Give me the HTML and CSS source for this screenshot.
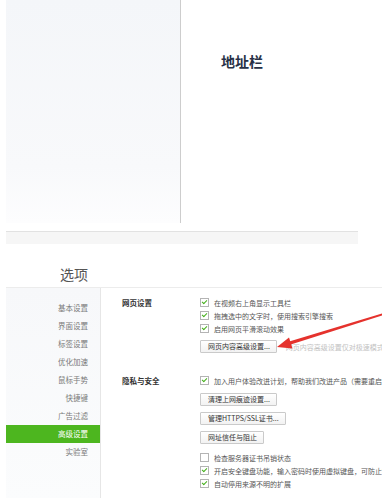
FILE: index.html
```html
<!DOCTYPE html>
<html>
<head>
<meta charset="utf-8">
<title>选项 - 高级设置</title>
<link rel="stylesheet" href="styles.css">
</head>

<body>
<!-- 上半部：地址栏示意 -->
<div class="shot-top">
  <div class="pane-side"></div>
  <div class="pane-main"><span class="addr">地址栏</span></div>
</div>
<div class="shot-band"></div>

<!-- 下半部：选项页 -->
<div class="opt-head">选项</div>
<div class="options">
  <div class="nav">
    <a>基本设置</a>
    <a>界面设置</a>
    <a>标签设置</a>
    <a>优化加速</a>
    <a>鼠标手势</a>
    <a>快捷键</a>
    <a>广告过滤</a>
    <a class="cur">高级设置</a>
    <a>实验室</a>
  </div>
  <div class="content">
    <dl class="sec">
      <dt>网页设置</dt>
      <dd>
        <div class="row"><span class="cb on"></span>在视频右上角显示工具栏</div>
        <div class="row"><span class="cb on"></span>拖拽选中的文字时，使用搜索引擎搜索</div>
        <div class="row"><span class="cb on"></span>启用网页平滑滚动效果</div>
        <div class="btn-row"><span class="btn">网页内容高级设置...</span><span class="hint">网页内容高级设置仅对极速模式有效</span></div>
      </dd>
    </dl>
    <dl class="sec">
      <dt>隐私与安全</dt>
      <dd>
        <div class="row"><span class="cb on"></span>加入用户体验改进计划，帮助我们改进产品（需要重启浏览器）</div>
        <div class="btn-row"><span class="btn">清理上网痕迹设置...</span></div>
        <div class="btn-row"><span class="btn">管理HTTPS/SSL证书...</span></div>
        <div class="btn-row"><span class="btn">网址信任与阻止</span></div>
        <div class="row first"><span class="cb"></span>检查服务器证书吊销状态</div>
        <div class="row"><span class="cb on"></span>开启安全键盘功能，输入密码时使用虚拟键盘，可防止键盘记录</div>
        <div class="row"><span class="cb on"></span>自动停用来源不明的扩展</div>
      </dd>
    </dl>
  </div>
</div>

<!-- 红色标注箭头 -->
<svg class="mark" width="382" height="498" viewBox="0 0 382 498">
  <polygon points="382,313.5 382,315.5 290,344.8 289.2,341.6" fill="#e5322d"/>
  <polygon points="277,347 289,337.5 292.5,348.5" fill="#e5322d"/>
</svg>
</body>
</html>
```

FILE: styles.css
```css
/* 整体 */
html, body {margin: 0; padding: 0;}
body {position: relative; width: 382px; height: 498px; overflow: hidden; background: #fff; font-family: "Noto Sans CJK SC", "Liberation Sans", sans-serif; color: #555;}

/* 上半部截图 */
.shot-top {display: flex; margin-left: 6px; width: 352px; height: 231px; border-bottom: 1px solid #e2e2e2;}
.shot-top .pane-side {width: 174px; height: 223px; border-right: 1px solid #cdcdcd; background: linear-gradient(#f4f6f9, #f8f9fb 75%, #fdfdfe);}
.shot-top .pane-main {padding: 48px 0 0 40px;}
.shot-top .addr {font-size: 14px; line-height: 18px; font-weight: bold; color: #263046;}
.shot-band {margin-left: 6px; width: 352px; height: 12px; background: #f6f6f6;}

/* 选项页 */
.opt-head {box-sizing: border-box; height: 43px; padding: 21px 0 0 60px; font-size: 14px; line-height: 18px; color: #555;}
.options {display: flex; margin-left: 6px; height: 212px; border-top: 1px solid #ececec;}
.options .nav {width: 94px; padding-top: 11px; border-right: 1px solid #e6e6e6; background: linear-gradient(#f7f8fa, #fbfcfd);}
.options .nav a {display: block; height: 18px; line-height: 18px; padding-right: 12px; text-align: right; font-size: 7.5px; color: #7a7a7a;}
.options .nav a.cur {background: #4db61f; color: #fff;}

.content {flex: 1; min-width: 0; padding: 8px 0 0 21px; overflow: hidden;}
.sec {display: grid; grid-template-columns: 78px 1fr; margin: 0;}
.sec + .sec {margin-top: 21px;}
.sec dt {height: 13px; line-height: 13px; font-size: 7.5px; font-weight: bold; color: #333;}
.sec dd {margin: 0; min-width: 0;}

.row {display: flex; align-items: center; gap: 5px; height: 13px; font-size: 7px; color: #555; white-space: nowrap;}
.row.first {margin-top: 7px;}
.cb {flex: none; box-sizing: border-box; width: 9px; height: 9px; border: 1px solid #b4b4b4; background: #fff;}
.cb.on::after {content: ""; display: block; width: 2px; height: 4px; margin: 0 auto; border: solid #45b01c; border-width: 0 1.5px 1.5px 0; transform: rotate(45deg);}

.btn-row {display: flex; align-items: center; margin-top: 5px; white-space: nowrap;}
.sec + .sec .btn-row {margin-top: 6px;}
.btn {box-sizing: border-box; height: 13px; line-height: 11px; padding: 0 6px 0 7px; border: 1px solid #cacaca; border-radius: 1px; background: linear-gradient(#fff, #f2f2f2); font-size: 7px; color: #333;}
.hint {margin-left: 9px; font-size: 7px; color: #c2c2c2;}

/* 标注箭头 */
.mark {position: absolute; left: 0; top: 0; pointer-events: none;}
```
